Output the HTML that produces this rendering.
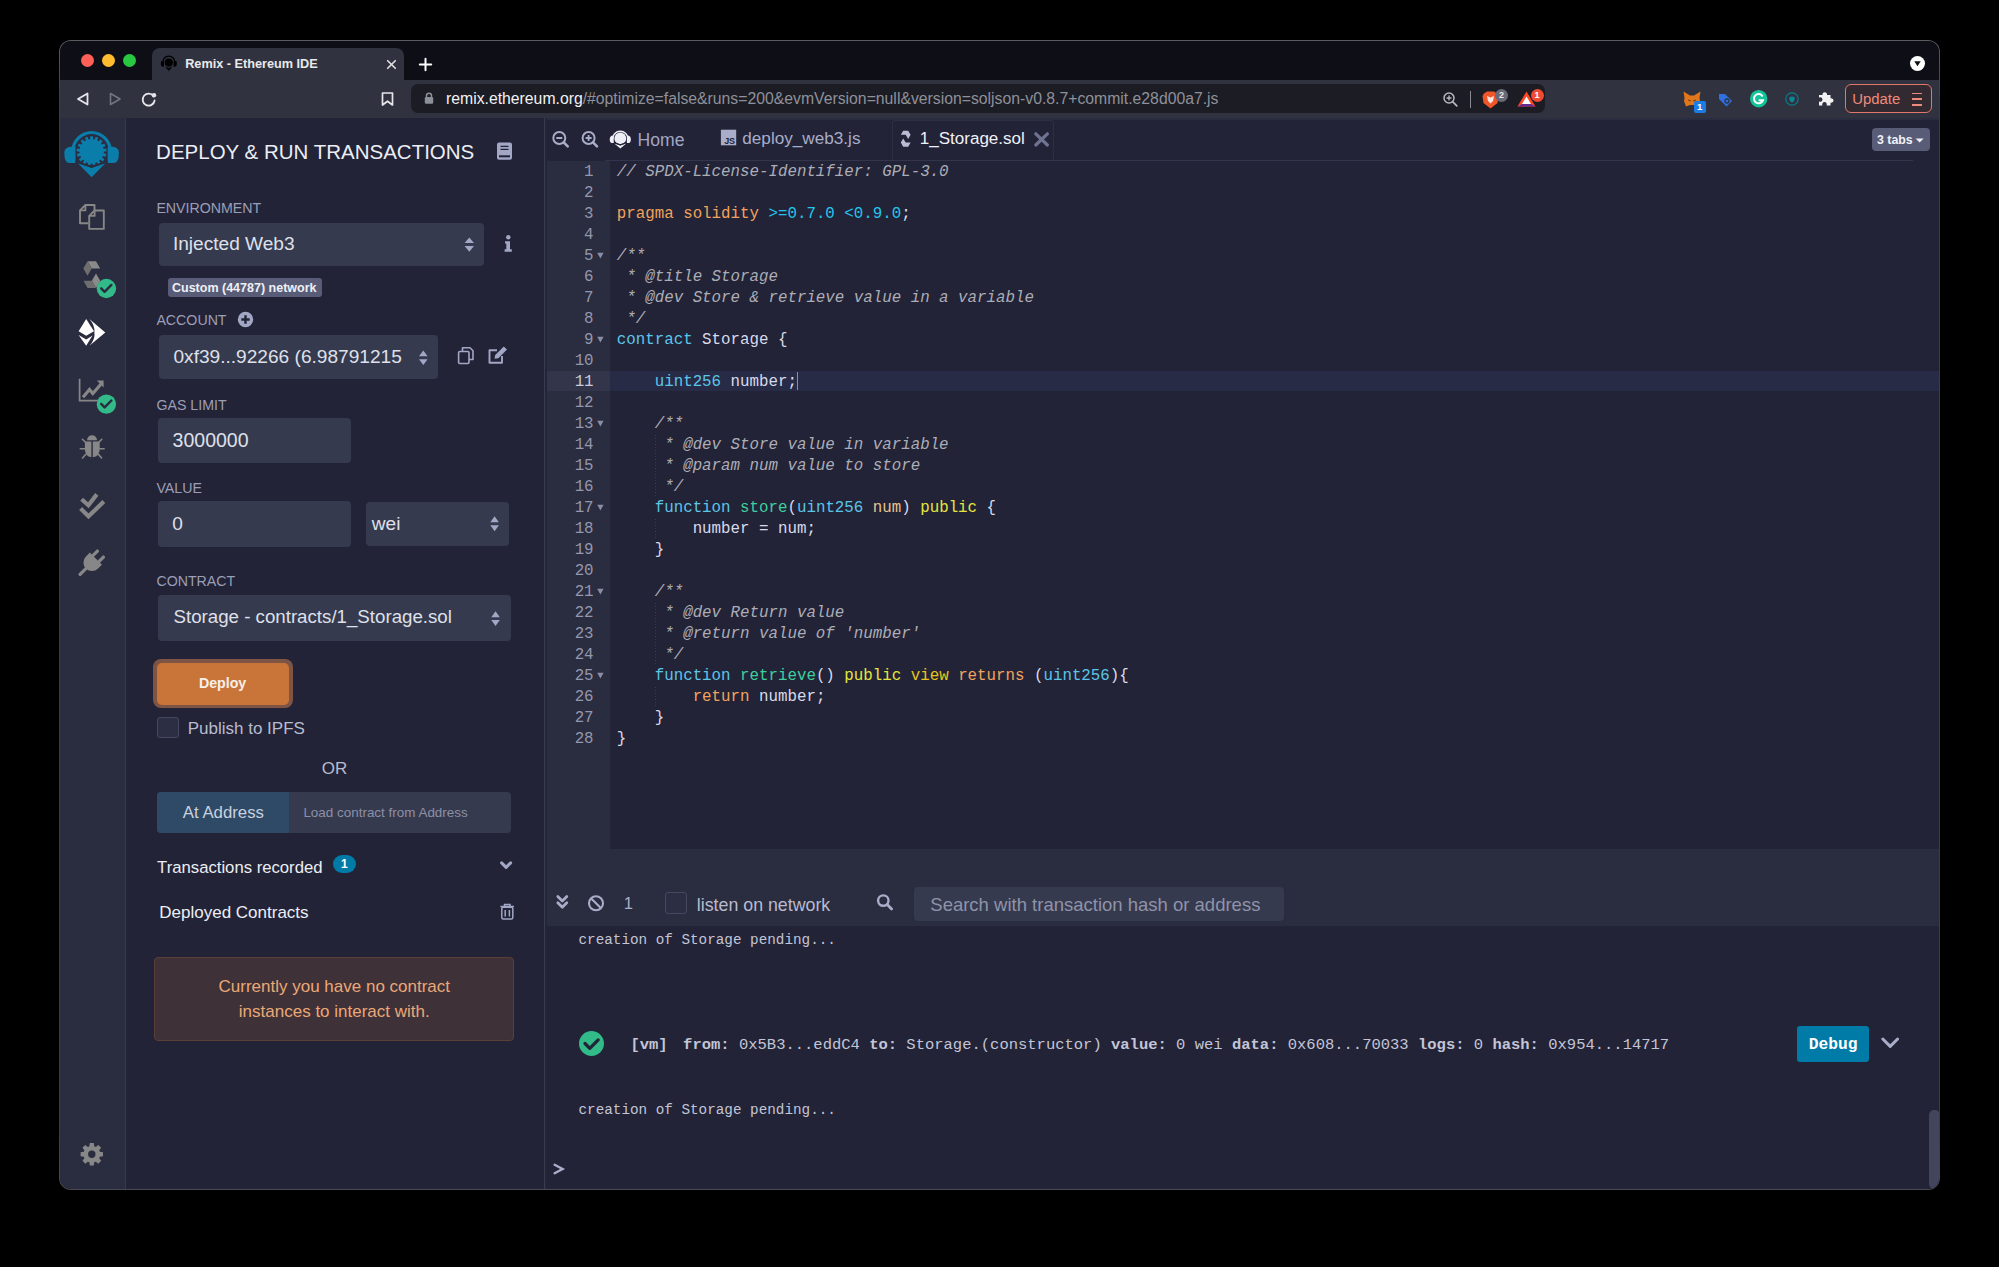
<!DOCTYPE html><html><head><meta charset="utf-8"><title>Remix - Ethereum IDE</title>
<style>html,body{margin:0;padding:0;background:#000;width:1999px;height:1267px;overflow:hidden;position:relative;font-family:"Liberation Sans", sans-serif}
div,svg{box-sizing:border-box}</style></head><body>
<div style="position:absolute;left:59px;top:40px;width:1881px;height:1150px;border-radius:12px;background:linear-gradient(#5c5d63,#3c3d43 60px,#3c3d43 1090px,#4a4b52)"></div>
<div style="position:absolute;left:60px;top:41px;width:1879px;height:1148px;border-radius:11px;overflow:hidden;background:#222336">
<div style="position:absolute;left:-60px;top:-41px;width:1999px;height:1267px">
<div style="position:absolute;left:59px;top:40px;width:1881px;height:40px;background:#0d0e16"></div>
<div style="position:absolute;left:59px;top:80px;width:1881px;height:38px;background:#30333f"></div>
<div style="position:absolute;left:152px;top:48px;width:252px;height:33px;background:#30333f;border-radius:8px 8px 0 0"></div>
<div style="position:absolute;left:80.5px;top:54px;width:13px;height:13px;border-radius:50%;background:#fe5f57"></div>
<div style="position:absolute;left:101.5px;top:54px;width:13px;height:13px;border-radius:50%;background:#febc2e"></div>
<div style="position:absolute;left:122.5px;top:54px;width:13px;height:13px;border-radius:50%;background:#28c840"></div>
<svg style="position:absolute;left:0;top:0" width="1999" height="1267" viewBox="0 0 1999 1267"><g fill="#000"><circle cx="168.8" cy="62.6" r="4.1"/><path d="M161 61.2 H164 V66.8 H162.6 Q160.8 66.6 160.8 64 Q160.8 61.6 161 61.2z M176.6 61.2 H173.6 V66.8 H175 Q176.8 66.6 176.8 64 Q176.8 61.6 176.6 61.2z"/><path d="M165 66.6 L168.8 67.9 L172.6 66.6 L168.8 70.9z"/></g><path d="M162.9 62 A5.9 5.9 0 0 1 174.7 62" fill="none" stroke="#000" stroke-width="1.3"/></svg>
<div style="position:absolute;left:185.20px;top:57.55px;font-family:'Liberation Sans', sans-serif;font-size:12.7px;line-height:12.7px;font-weight:600;color:#e9e9ec;white-space:pre;">Remix - Ethereum IDE</div>
<svg style="position:absolute;left:387px;top:59.5px;overflow:visible;" width="9" height="9" viewBox="0 0 9 9"><path d="M0.7 0.7 L8.3 8.3 M8.3 0.7 L0.7 8.3" stroke="#e0e0e4" stroke-width="1.6" stroke-linecap="round"/></svg>
<svg style="position:absolute;left:418.5px;top:57.8px;overflow:visible;" width="13" height="13" viewBox="0 0 13 13"><path d="M6.5 0.8 V12.2 M0.8 6.5 H12.2" stroke="#fff" stroke-width="2" stroke-linecap="round"/></svg>
<svg style="position:absolute;left:1909.5px;top:56.4px;overflow:visible;" width="15" height="15" viewBox="0 0 15 15"><circle cx="7.5" cy="7.5" r="7.5" fill="#fff"/><path d="M4.3 5.3 L10.7 5.3 L7.5 10.2z" fill="#0d0e16"/></svg>
<svg style="position:absolute;left:76px;top:92px;overflow:visible;" width="13" height="14" viewBox="0 0 13 14"><path d="M11.5 1.5 L11.5 12.5 L2 7z" fill="none" stroke="#e6e6ea" stroke-width="1.8" stroke-linejoin="round"/></svg>
<svg style="position:absolute;left:109px;top:92px;overflow:visible;" width="13" height="14" viewBox="0 0 13 14"><path d="M1.5 1.5 L1.5 12.5 L11 7z" fill="none" stroke="#72747e" stroke-width="1.6" stroke-linejoin="round"/></svg>
<svg style="position:absolute;left:141px;top:92px;overflow:visible;" width="16" height="15" viewBox="0 0 16 15"><path d="M12.6 4.2 A6 6 0 1 0 13.6 8.5" fill="none" stroke="#e6e6ea" stroke-width="1.8" stroke-linecap="round"/><circle cx="13" cy="3.3" r="2.2" fill="#e6e6ea"/></svg>
<svg style="position:absolute;left:381px;top:92px;overflow:visible;" width="13" height="14" viewBox="0 0 13 14"><path d="M1.5 1 H11.5 V13 L6.5 9.2 L1.5 13z" fill="none" stroke="#e6e6ea" stroke-width="1.7" stroke-linejoin="round"/></svg>
<div style="position:absolute;left:411px;top:84px;width:1134px;height:29px;background:#1b1c24;border-radius:7px"></div>
<svg style="position:absolute;left:424px;top:92px;overflow:visible;" width="10" height="12" viewBox="0 0 10 12"><path d="M2.5 5 V3.8 A2.5 2.5 0 0 1 7.5 3.8 V5" fill="none" stroke="#8e9099" stroke-width="1.5"/><rect x="0.8" y="5" width="8.4" height="6.8" rx="1.2" fill="#8e9099"/></svg>
<div style="position:absolute;left:446.00px;top:90.85px;font-family:'Liberation Sans', sans-serif;font-size:15.77px;line-height:15.77px;font-weight:400;color:#fff;white-space:pre;"><span style="color:#f2f2f4">remix.ethereum.org</span><span style="color:#8f9099">/#optimize=false&amp;runs=200&amp;evmVersion=null&amp;version=soljson-v0.8.7+commit.e28d00a7.js</span></div>
<svg style="position:absolute;left:1443px;top:92px;overflow:visible;" width="15" height="15" viewBox="0 0 15 15"><circle cx="6" cy="6" r="5" fill="none" stroke="#b6b7bf" stroke-width="1.5"/><path d="M9.6 9.6 L13.8 13.8" stroke="#b6b7bf" stroke-width="1.7" stroke-linecap="round"/><path d="M6 3.5 V8.5 M3.5 6 H8.5" stroke="#b6b7bf" stroke-width="1.4"/></svg>
<div style="position:absolute;left:1469.5px;top:90.5px;width:1.5px;height:17.0px;background:#8a8b94"></div>
<svg style="position:absolute;left:1482px;top:90.5px;overflow:visible;" width="17" height="18" viewBox="0 0 17 18"><path d="M2 2.5 L5 0.5 H12 L15 2.5 L16.5 5 L15.5 12 L8.5 17.5 L1.5 12 L0.5 5z" fill="#f1562b"/><path d="M5 5 L8.5 6.5 L12 5 L11 10 L8.5 12.5 L6 10z" fill="#fff" opacity="0.85"/></svg>
<div style="position:absolute;left:1495px;top:88.5px;width:13px;height:13px;border-radius:50%;background:#686a78;color:#e8e8ec;font:700 9px/13px 'Liberation Sans',sans-serif;text-align:center">2</div>
<svg style="position:absolute;left:1517px;top:91px;overflow:visible;" width="19" height="16" viewBox="0 0 19 16"><path d="M9.5 0.5 L18.5 15.5 H0.5z" fill="#ff4724"/><path d="M9.5 5.5 L14 13 H5z" fill="#fff"/><path d="M0.5 15.5 L5 13 H14 L18.5 15.5z" fill="#662d91"/></svg>
<div style="position:absolute;left:1530.5px;top:88.5px;width:13px;height:13px;border-radius:50%;background:#f04a33;color:#fff;font:700 9px/13px 'Liberation Sans',sans-serif;text-align:center">1</div>
<svg style="position:absolute;left:1682.5px;top:90.5px;overflow:visible;" width="18" height="16" viewBox="0 0 18 16"><path d="M0.5 0.5 L7 4.5 H11 L17.5 0.5 L16.5 7 L17 10 L15 15.5 L11 14 H7 L3 15.5 L1 10 L1.5 7z" fill="#e2761b"/><path d="M5 9 L8 10 M13 9 L10 10" stroke="#763d16" stroke-width="1"/></svg>
<div style="position:absolute;left:1693.5px;top:100.5px;width:12.5px;height:12.5px;border-radius:2px;background:#1c7ce6;color:#fff;font:700 9.5px/12.5px 'Liberation Sans',sans-serif;text-align:center">1</div>
<svg style="position:absolute;left:1717.5px;top:92.5px;overflow:visible;" width="15" height="14" viewBox="0 0 15 14"><path d="M1 1 H7 L14 8 L8.5 13.5 L1 6z" fill="#2f6fe0"/><circle cx="9" cy="8" r="2" fill="none" stroke="#30333f" stroke-width="1.3"/></svg>
<svg style="position:absolute;left:1749.7px;top:89.9px;overflow:visible;" width="17.4" height="17.4" viewBox="0 0 17.4 17.4"><circle cx="8.7" cy="8.7" r="8.7" fill="#15c39a"/><path d="M12.2 5.8 A4.6 4.6 0 1 0 12.9 10.3 H9.5" fill="none" stroke="#fff" stroke-width="2" stroke-linecap="round"/></svg>
<svg style="position:absolute;left:1784.9px;top:91.5px;overflow:visible;" width="14" height="14" viewBox="0 0 14 14"><circle cx="7" cy="7" r="6.2" fill="none" stroke="#0c7b8a" stroke-width="1.2"/><path d="M4.2 5.6 Q7 3.2 9.8 5.6 Q10 9.6 7 10.4 Q4 9.6 4.2 5.6z" fill="#0d8596"/></svg>
<svg style="position:absolute;left:1818px;top:90px;overflow:visible;" width="16" height="16" viewBox="0 0 16 16"><path d="M1 5 H4.5 A2.3 2.3 0 1 1 9 5 H12.5 V8.3 A2.3 2.3 0 1 1 12.5 12.7 V15.5 H8.5 A2.3 2.3 0 1 0 4.5 15.5 H1 V11.5 A2.3 2.3 0 1 0 1 7.5z" fill="#f2f2f2"/></svg>
<div style="position:absolute;left:1845px;top:84.2px;width:86.6px;height:28.8px;border:1.5px solid #e0776a;border-radius:6px;background:#332a31"></div>
<div style="position:absolute;left:1852.20px;top:91.59px;font-family:'Liberation Sans', sans-serif;font-size:14.9px;line-height:14.9px;font-weight:400;color:#ee8a7c;white-space:pre;">Update</div>
<div style="position:absolute;left:1912px;top:92.5px;width:10px;height:1.5999999999999943px;background:#ee8a7c"></div>
<div style="position:absolute;left:1912px;top:98.3px;width:10px;height:1.5999999999999943px;background:#ee8a7c"></div>
<div style="position:absolute;left:1912px;top:104.1px;width:10px;height:1.5999999999999943px;background:#ee8a7c"></div>
<div style="position:absolute;left:59px;top:118px;width:66px;height:1071px;background:#2a2c3f"></div>
<div style="position:absolute;left:125px;top:118px;width:1px;height:1071px;background:#36384c"></div>
<div style="position:absolute;left:126px;top:118px;width:418px;height:1071px;background:#222336"></div>
<div style="position:absolute;left:544px;top:118px;width:1px;height:1071px;background:#393b4f"></div>
<div style="position:absolute;left:545px;top:118px;width:2px;height:1071px;background:#242538"></div>
<svg style="position:absolute;left:0;top:0" width="1999" height="1267" viewBox="0 0 1999 1267"><g fill="#0a7dab"><path d="M71.2 151.3 A20.4 20.4 0 0 1 112 151.3 L112 157 L108.8 157 L108.8 151.3 A17.2 17.2 0 0 0 74.4 151.3 L74.4 157 L71.2 157z"/><path d="M75.5 146.8 L70 146.8 Q64.3 147.5 64.3 153 Q64.3 162.9 69 162.9 L75.6 162.9z"/><path d="M107.7 146.8 L113.2 146.8 Q118.9 147.5 118.9 153 Q118.9 162.9 114.2 162.9 L107.6 162.9z"/><path d="M77.6 163 L91.6 168 L105.6 163 L91.6 177.3z"/></g><clipPath id="sunclip"><path d="M60 120 H124 V160.6 L91.6 165.4 L60 160.6z"/></clipPath><circle cx="91.6" cy="151.3" r="12.1" fill="#0a7dab" clip-path="url(#sunclip)"/><path d="M90.22 136.36 L92.98 136.36 L93.09 139.49 L94.47 139.75 L95.70 136.87 L98.29 137.87 L97.26 140.83 L98.45 141.57 L100.64 139.33 L102.69 141.19 L100.66 143.58 L101.50 144.70 L104.35 143.40 L105.59 145.88 L102.83 147.37 L103.22 148.73 L106.34 148.54 L106.60 151.30 L103.49 151.70 L103.36 153.10 L106.34 154.06 L105.59 156.72 L102.55 155.97 L101.92 157.22 L104.35 159.20 L102.69 161.41 L100.12 159.61 L99.08 160.55 L100.64 163.27 L98.29 164.73 L96.55 162.12 L95.24 162.63 L95.70 165.73 L92.98 166.24 L92.30 163.18 L90.90 163.18 L90.22 166.24 L87.50 165.73 L87.96 162.63 L86.65 162.12 L84.91 164.73 L82.56 163.27 L84.12 160.55 L83.08 159.61 L80.51 161.41 L78.85 159.20 L81.28 157.22 L80.65 155.97 L77.61 156.72 L76.86 154.06 L79.84 153.10 L79.71 151.70 L76.60 151.30 L76.86 148.54 L79.98 148.73 L80.37 147.37 L77.61 145.88 L78.85 143.40 L81.70 144.70 L82.54 143.58 L80.51 141.19 L82.56 139.33 L84.75 141.57 L85.94 140.83 L84.91 137.87 L87.50 136.87 L88.73 139.75 L90.11 139.49z" fill="#0a7dab" clip-path="url(#sunclip)"/><path d="M75.5 161.6 L91.6 166.6 L107.7 161.6" fill="none" stroke="#2a2c3f" stroke-width="1.9"/><g fill="none" stroke="#878787" stroke-width="1.9" stroke-linejoin="round"><path d="M88.4 223.2 H80 V210.4 L85.4 205 H94.5 V210.2"/><path d="M80 210.4 H85.4 V205"/><path d="M89.2 215.9 L94.6 210.5 H103.8 V228.9 H89.2z"/><path d="M89.2 215.9 H94.6 V210.5"/></g><g><path d="M87.5 261.3 L96 261.3 L100.2 268.6 L91.7 268.6z" fill="#8a8a8a"/><path d="M87.5 261.3 L91.7 268.6 L87.5 275.8 L83.3 268.6z" fill="#6e6e6e"/><path d="M91.7 268.6 L100.2 268.6 L96 275.8 L87.5 275.8z" fill="#5a5a5a" opacity="0.0"/><path d="M96 273.4 L100.2 280.7 L96 287.9 L91.8 280.7z" fill="#8a8a8a"/><path d="M83.5 280.7 L92 280.7 L96 287.9 L87.6 287.9z" fill="#6e6e6e"/></g><circle cx="106.4" cy="288.5" r="9.7" fill="#32ba89"/><path d="M101.2 288.3 L104.60000000000001 291.8 L111.4 284.9" fill="none" stroke="#2a2c3f" stroke-width="2.4" stroke-linecap="round" stroke-linejoin="round"/><g fill="#fff"><path d="M86.2 319 L94 331.3 L86.2 335.8 L78.6 331.3z"/><path d="M78.6 335 L86.2 339.5 L92.5 335.6 L86.2 345.8z"/><path d="M89.4 319 L105.3 332.4 L89.4 345.8 Q95.5 339 94.4 332.4 Q95 325 89.4 319z"/></g><g fill="none" stroke="#878787"><path d="M79.6 378.8 V400.6 H98" stroke-width="1.7"/><path d="M83 397.2 L89.5 389.5 L92.8 393.5 L101.5 383.5" stroke-width="3.2" stroke-linejoin="miter"/></g><path d="M96.8 380.6 L103.6 380.6 L103.6 387.6z" fill="#878787"/><circle cx="106.4" cy="404.1" r="9.7" fill="#32ba89"/><path d="M101.2 403.90000000000003 L104.60000000000001 407.40000000000003 L111.4 400.5" fill="none" stroke="#2a2c3f" stroke-width="2.4" stroke-linecap="round" stroke-linejoin="round"/><g fill="#878787"><path d="M87 440.2 A5 5 0 0 1 97.1 440.2z"/><path d="M84.9 441.4 H91.4 V457.2 Q84.9 456.5 84.9 449z"/><path d="M92.8 441.4 H99.7 V449 Q99.7 456.5 92.8 457.2z"/></g><g stroke="#878787" stroke-width="1.6" stroke-linecap="round"><path d="M82.4 439.3 L86 442.8 M101.8 439.3 L98.3 442.8 M80.3 448.7 H84.9 M99.7 448.7 H104.1 M82.5 458 L85.6 454.4 M101.6 458 L98.6 454.4"/></g><g fill="none" stroke="#878787" stroke-width="4.2" stroke-linecap="butt" stroke-linejoin="miter"><path d="M81.6 499.2 L88.4 505.2 L96.8 494.4"/><path d="M80.6 508.6 L88.5 516.3 L103.8 501.6"/></g><g transform="translate(91.3 563.2) rotate(45)" fill="#878787"><rect x="-5.9" y="-14.5" width="3.3" height="9" rx="1.6"/><rect x="2.6" y="-14.5" width="3.3" height="9" rx="1.6"/><path d="M-8.6 -6.5 H8.6 V-1 A8.6 8.6 0 0 1 -8.6 -1z"/><rect x="-1.65" y="5" width="3.3" height="12.5" rx="1.6"/></g><path d="M103.02 1152.30 L103.02 1156.30 L99.84 1156.74 L99.21 1158.26 L101.15 1160.82 L98.32 1163.65 L95.76 1161.71 L94.24 1162.34 L93.80 1165.52 L89.80 1165.52 L89.36 1162.34 L87.84 1161.71 L85.28 1163.65 L82.45 1160.82 L84.39 1158.26 L83.76 1156.74 L80.58 1156.30 L80.58 1152.30 L83.76 1151.86 L84.39 1150.34 L82.45 1147.78 L85.28 1144.95 L87.84 1146.89 L89.36 1146.26 L89.80 1143.08 L93.80 1143.08 L94.24 1146.26 L95.76 1146.89 L98.32 1144.95 L101.15 1147.78 L99.21 1150.34 L99.84 1151.86z M95.5 1154.3 A3.7 3.7 0 1 0 88.1 1154.3 A3.7 3.7 0 1 0 95.5 1154.3z" fill="#878787" fill-rule="evenodd"/></svg>
<div style="position:absolute;left:156.10px;top:141.55px;font-family:'Liberation Sans', sans-serif;font-size:20.5px;line-height:20.5px;font-weight:400;color:#eceef5;white-space:pre;">DEPLOY &amp; RUN TRANSACTIONS</div>
<div style="position:absolute;left:156.40px;top:200.98px;font-family:'Liberation Sans', sans-serif;font-size:14.2px;line-height:14.2px;font-weight:400;color:#9c9eb7;white-space:pre;">ENVIRONMENT</div>
<div style="position:absolute;left:158.5px;top:222.6px;width:325.5px;height:43.7px;background:#363a4e;border-radius:4px;"></div>
<div style="position:absolute;left:172.90px;top:233.93px;font-family:'Liberation Sans', sans-serif;font-size:19.1px;line-height:19.1px;font-weight:400;color:#dfe0ea;white-space:pre;">Injected Web3</div>
<div style="position:absolute;left:168px;top:278.3px;width:154.0px;height:18.4px;background:#595c76;border-radius:3px;"></div>
<div style="position:absolute;left:172.00px;top:281.62px;font-family:'Liberation Sans', sans-serif;font-size:12.5px;line-height:12.5px;font-weight:700;color:#eef0f6;white-space:pre;">Custom (44787) network</div>
<div style="position:absolute;left:156.40px;top:313.28px;font-family:'Liberation Sans', sans-serif;font-size:14.2px;line-height:14.2px;font-weight:400;color:#9c9eb7;white-space:pre;">ACCOUNT</div>
<div style="position:absolute;left:158.5px;top:335.2px;width:279.1px;height:44.3px;background:#363a4e;border-radius:4px;"></div>
<div style="position:absolute;left:173.50px;top:346.53px;font-family:'Liberation Sans', sans-serif;font-size:19.1px;line-height:19.1px;font-weight:400;color:#dfe0ea;white-space:pre;">0xf39...92266 (6.98791215</div>
<div style="position:absolute;left:156.40px;top:397.68px;font-family:'Liberation Sans', sans-serif;font-size:14.2px;line-height:14.2px;font-weight:400;color:#9c9eb7;white-space:pre;">GAS LIMIT</div>
<div style="position:absolute;left:157.6px;top:417.9px;width:193.5px;height:45.6px;background:#363a4e;border-radius:4px;"></div>
<div style="position:absolute;left:172.60px;top:430.79px;font-family:'Liberation Sans', sans-serif;font-size:19.5px;line-height:19.5px;font-weight:400;color:#dfe0ea;white-space:pre;">3000000</div>
<div style="position:absolute;left:156.40px;top:480.78px;font-family:'Liberation Sans', sans-serif;font-size:14.2px;line-height:14.2px;font-weight:400;color:#9c9eb7;white-space:pre;">VALUE</div>
<div style="position:absolute;left:157.6px;top:500.8px;width:193.4px;height:45.8px;background:#363a4e;border-radius:4px;"></div>
<div style="position:absolute;left:172.20px;top:514.33px;font-family:'Liberation Sans', sans-serif;font-size:19.1px;line-height:19.1px;font-weight:400;color:#dfe0ea;white-space:pre;">0</div>
<div style="position:absolute;left:366.2px;top:502px;width:143.1px;height:43.7px;background:#363a4e;border-radius:4px;"></div>
<div style="position:absolute;left:371.80px;top:514.33px;font-family:'Liberation Sans', sans-serif;font-size:19.1px;line-height:19.1px;font-weight:400;color:#dfe0ea;white-space:pre;">wei</div>
<div style="position:absolute;left:156.40px;top:573.98px;font-family:'Liberation Sans', sans-serif;font-size:14.2px;line-height:14.2px;font-weight:400;color:#9c9eb7;white-space:pre;">CONTRACT</div>
<div style="position:absolute;left:157.6px;top:594.5px;width:353.6px;height:46.2px;background:#363a4e;border-radius:4px;"></div>
<div style="position:absolute;left:173.50px;top:608.17px;font-family:'Liberation Sans', sans-serif;font-size:18.7px;line-height:18.7px;font-weight:400;color:#dfe0ea;white-space:pre;">Storage - contracts/1_Storage.sol</div>
<div style="position:absolute;left:153.4px;top:658.6px;width:139.2px;height:49.8px;border-radius:8px;background:#7e5545"></div>
<div style="position:absolute;left:157.2px;top:663px;width:132.0px;height:42.1px;background:#c97539;border-radius:5px;"></div>
<div style="position:absolute;left:198.90px;top:675.98px;font-family:'Liberation Sans', sans-serif;font-size:14.2px;line-height:14.2px;font-weight:700;color:#f7efe9;white-space:pre;">Deploy</div>
<div style="position:absolute;left:157.2px;top:717px;width:21.7px;height:20.8px;border-radius:3px;background:#2c2f43;border:1px solid #45485e"></div>
<div style="position:absolute;left:187.70px;top:719.91px;font-family:'Liberation Sans', sans-serif;font-size:17px;line-height:17px;font-weight:400;color:#b9bbcf;white-space:pre;">Publish to IPFS</div>
<div style="position:absolute;left:321.70px;top:759.61px;font-family:'Liberation Sans', sans-serif;font-size:17px;line-height:17px;font-weight:400;color:#b9bbcf;white-space:pre;">OR</div>
<div style="position:absolute;left:157.2px;top:791.6px;width:354.0px;height:41.9px;background:#363a4e;border-radius:4px;"></div>
<div style="position:absolute;left:157.2px;top:791.6px;width:131.6px;height:41.9px;background:#2e4a67;border-radius:4px 0 0 4px"></div>
<div style="position:absolute;left:182.80px;top:805.18px;font-family:'Liberation Sans', sans-serif;font-size:16.8px;line-height:16.8px;font-weight:400;color:#c9d1de;white-space:pre;">At Address</div>
<div style="position:absolute;left:303.40px;top:805.91px;font-family:'Liberation Sans', sans-serif;font-size:13.45px;line-height:13.45px;font-weight:400;color:#8c90a8;white-space:pre;">Load contract from Address</div>
<div style="position:absolute;left:157.10px;top:859.76px;font-family:'Liberation Sans', sans-serif;font-size:16.7px;line-height:16.7px;font-weight:400;color:#eceef5;white-space:pre;">Transactions recorded</div>
<div style="position:absolute;left:332.9px;top:854.9px;width:22.8px;height:18.6px;border-radius:9.3px;background:#007aa6;color:#fff;font:700 12px/18.6px 'Liberation Sans',sans-serif;text-align:center">1</div>
<div style="position:absolute;left:159.30px;top:904.41px;font-family:'Liberation Sans', sans-serif;font-size:17px;line-height:17px;font-weight:400;color:#eceef5;white-space:pre;">Deployed Contracts</div>
<div style="position:absolute;left:154.2px;top:957.2px;width:360.2px;height:84px;border-radius:4px;background:#3e3137;border:1px solid #5a3f36"></div>
<div style="position:absolute;left:154.2px;top:975.2px;width:360.2px;font-family:'Liberation Sans',sans-serif;font-size:17px;line-height:24.7px;color:#eba877;text-align:center">Currently you have no contract<br>instances to interact with.</div>
<svg style="position:absolute;left:0;top:0" width="1999" height="1267" viewBox="0 0 1999 1267"><rect x="497" y="142.4" width="15" height="17.4" rx="2" fill="#a3a7c6"/><rect x="499" y="155.3" width="11" height="2" fill="#222336"/><path d="M500.5 146.3 H508.5 M500.5 149.3 H508.5" stroke="#222336" stroke-width="1.2"/><path d="M464.6 243.12 L469.3 237.4 L474 243.12z M464.6 245.98 L469.3 251.7 L474 245.98z" fill="#a3a7c6"/><circle cx="508.3" cy="237.2" r="2.2" fill="#a3a7c6"/><path d="M505 241.3 H510 V249.3 H511.8 V251.7 H504.6 V249.3 H506.3 V243.6 H505z" fill="#a3a7c6"/><circle cx="245.5" cy="319.5" r="7.7" fill="#a3a7c6"/><path d="M245.5 315.3 V323.7 M241.3 319.5 H249.7" stroke="#222336" stroke-width="2.4"/><path d="M419 356.24 L423.3 350.4 L427.6 356.24z M419 359.15999999999997 L423.3 365 L427.6 359.15999999999997z" fill="#a3a7c6"/><g fill="none" stroke="#a3a7c6" stroke-width="1.6" stroke-linejoin="round"><path d="M462.5 351.5 V347.8 H470 L473 350.8 V359.5 H469"/><rect x="458.6" y="351.5" width="10.4" height="12" rx="1.2"/></g><g fill="none" stroke="#a3a7c6" stroke-width="1.9" stroke-linejoin="round"><path d="M497 350.3 H489.5 V362.8 H502 V356"/></g><path d="M494.5 358.7 L495.2 355 L503.8 346.4 L507 349.6 L498.4 358.2z" fill="#a3a7c6"/><path d="M490.3 522.2 L494.6 516.2 L498.9 522.2z M490.3 525.2 L494.6 531.2 L498.9 525.2z" fill="#a3a7c6"/><path d="M491.3 617.18 L495.55 611.3 L499.8 617.18z M491.3 620.12 L495.55 626 L499.8 620.12z" fill="#a3a7c6"/><path d="M501.6 862.9 L506.1 867.4 L510.6 862.9" fill="none" stroke="#a3a7c6" stroke-width="3" stroke-linecap="round" stroke-linejoin="round"/><g fill="none" stroke="#a3a7c6" stroke-width="1.5"><rect x="501.8" y="907.3" width="11" height="11.8" rx="1.5"/><path d="M500.4 906.6 H514 M504.5 906.2 V904.6 H510 V906.2 M505.2 910 V916.5 M509.4 910 V916.5"/></g></svg>
<div style="position:absolute;left:547px;top:118px;width:1393px;height:1071px;background:#222336"></div>
<div style="position:absolute;left:547px;top:118px;width:1393px;height:1.5px;background:#2a2c3f"></div>
<div style="position:absolute;left:637.60px;top:131.50px;font-family:'Liberation Sans', sans-serif;font-size:17.6px;line-height:17.6px;font-weight:400;color:#a3a6c4;white-space:pre;">Home</div>
<div style="position:absolute;left:742.30px;top:129.88px;font-family:'Liberation Sans', sans-serif;font-size:17.15px;line-height:17.15px;font-weight:400;color:#a9adc9;white-space:pre;">deploy_web3.js</div>
<div style="position:absolute;left:892.3px;top:119.5px;width:162px;height:41px;border:1px solid #2c2e42;border-bottom:none;border-radius:3px 3px 0 0;background:#222336"></div>
<div style="position:absolute;left:919.70px;top:129.66px;font-family:'Liberation Sans', sans-serif;font-size:17.06px;line-height:17.06px;font-weight:400;color:#f0f1f6;white-space:pre;">1_Storage.sol</div>
<div style="position:absolute;left:1872px;top:128px;width:57.6px;height:23px;border-radius:4px;background:#595c76"></div>
<div style="position:absolute;left:1877.10px;top:133.59px;font-family:'Liberation Sans', sans-serif;font-size:12.3px;line-height:12.3px;font-weight:700;color:#f0f1f6;white-space:pre;">3 tabs</div>
<div style="position:absolute;left:605px;top:159.8px;width:1308px;height:1.1999999999999886px;background:#33364b"></div>
<div style="position:absolute;left:547px;top:161px;width:63px;height:688px;background:#2a2c3f"></div>
<div style="position:absolute;left:610px;top:370.7px;width:1330px;height:19.900000000000034px;background:#272b46"></div>
<div style="position:absolute;left:547px;top:370.7px;width:63px;height:19.900000000000034px;background:#33364b"></div>
<div style="position:absolute;left:540px;width:53.6px;text-align:right;top:164.89px;font-family:'Liberation Mono',monospace;font-size:15.8px;line-height:15.8px;color:#9497ad">1</div>
<div style="position:absolute;left:616.8px;top:164.89px;font-family:'Liberation Mono',monospace;font-size:15.8px;line-height:15.8px;color:#d9daeb;white-space:pre"><span style="color:#acadb6;font-style:italic;">// SPDX-License-Identifier: GPL-3.0</span></div>
<div style="position:absolute;left:540px;width:53.6px;text-align:right;top:185.89px;font-family:'Liberation Mono',monospace;font-size:15.8px;line-height:15.8px;color:#9497ad">2</div>
<div style="position:absolute;left:540px;width:53.6px;text-align:right;top:206.89px;font-family:'Liberation Mono',monospace;font-size:15.8px;line-height:15.8px;color:#9497ad">3</div>
<div style="position:absolute;left:616.8px;top:206.89px;font-family:'Liberation Mono',monospace;font-size:15.8px;line-height:15.8px;color:#d9daeb;white-space:pre"><span style="color:#f2a25e;">pragma solidity</span> <span style="color:#24c5ee;">&gt;=0.7.0 &lt;0.9.0</span><span style="color:#d9daeb;">;</span></div>
<div style="position:absolute;left:540px;width:53.6px;text-align:right;top:227.89px;font-family:'Liberation Mono',monospace;font-size:15.8px;line-height:15.8px;color:#9497ad">4</div>
<div style="position:absolute;left:540px;width:53.6px;text-align:right;top:248.89px;font-family:'Liberation Mono',monospace;font-size:15.8px;line-height:15.8px;color:#9497ad">5</div>
<div style="position:absolute;left:616.8px;top:248.89px;font-family:'Liberation Mono',monospace;font-size:15.8px;line-height:15.8px;color:#d9daeb;white-space:pre"><span style="color:#acadb6;font-style:italic;">/**</span></div>
<div style="position:absolute;left:540px;width:53.6px;text-align:right;top:269.89px;font-family:'Liberation Mono',monospace;font-size:15.8px;line-height:15.8px;color:#9497ad">6</div>
<div style="position:absolute;left:616.8px;top:269.89px;font-family:'Liberation Mono',monospace;font-size:15.8px;line-height:15.8px;color:#d9daeb;white-space:pre"><span style="color:#acadb6;font-style:italic;"> * @title Storage</span></div>
<div style="position:absolute;left:540px;width:53.6px;text-align:right;top:290.89px;font-family:'Liberation Mono',monospace;font-size:15.8px;line-height:15.8px;color:#9497ad">7</div>
<div style="position:absolute;left:616.8px;top:290.89px;font-family:'Liberation Mono',monospace;font-size:15.8px;line-height:15.8px;color:#d9daeb;white-space:pre"><span style="color:#acadb6;font-style:italic;"> * @dev Store &amp; retrieve value in a variable</span></div>
<div style="position:absolute;left:540px;width:53.6px;text-align:right;top:311.89px;font-family:'Liberation Mono',monospace;font-size:15.8px;line-height:15.8px;color:#9497ad">8</div>
<div style="position:absolute;left:616.8px;top:311.89px;font-family:'Liberation Mono',monospace;font-size:15.8px;line-height:15.8px;color:#d9daeb;white-space:pre"><span style="color:#acadb6;font-style:italic;"> */</span></div>
<div style="position:absolute;left:540px;width:53.6px;text-align:right;top:332.89px;font-family:'Liberation Mono',monospace;font-size:15.8px;line-height:15.8px;color:#9497ad">9</div>
<div style="position:absolute;left:616.8px;top:332.89px;font-family:'Liberation Mono',monospace;font-size:15.8px;line-height:15.8px;color:#d9daeb;white-space:pre"><span style="color:#5cc5e8;">contract</span><span style="color:#d9daeb;"> Storage {</span></div>
<div style="position:absolute;left:540px;width:53.6px;text-align:right;top:353.89px;font-family:'Liberation Mono',monospace;font-size:15.8px;line-height:15.8px;color:#9497ad">10</div>
<div style="position:absolute;left:540px;width:53.6px;text-align:right;top:374.89px;font-family:'Liberation Mono',monospace;font-size:15.8px;line-height:15.8px;color:#c9cbd9">11</div>
<div style="position:absolute;left:616.8px;top:374.89px;font-family:'Liberation Mono',monospace;font-size:15.8px;line-height:15.8px;color:#d9daeb;white-space:pre">    <span style="color:#5cc5e8;">uint256</span><span style="color:#d9daeb;"> number;</span></div>
<div style="position:absolute;left:540px;width:53.6px;text-align:right;top:395.89px;font-family:'Liberation Mono',monospace;font-size:15.8px;line-height:15.8px;color:#9497ad">12</div>
<div style="position:absolute;left:540px;width:53.6px;text-align:right;top:416.89px;font-family:'Liberation Mono',monospace;font-size:15.8px;line-height:15.8px;color:#9497ad">13</div>
<div style="position:absolute;left:616.8px;top:416.89px;font-family:'Liberation Mono',monospace;font-size:15.8px;line-height:15.8px;color:#d9daeb;white-space:pre">    <span style="color:#acadb6;font-style:italic;">/**</span></div>
<div style="position:absolute;left:540px;width:53.6px;text-align:right;top:437.89px;font-family:'Liberation Mono',monospace;font-size:15.8px;line-height:15.8px;color:#9497ad">14</div>
<div style="position:absolute;left:616.8px;top:437.89px;font-family:'Liberation Mono',monospace;font-size:15.8px;line-height:15.8px;color:#d9daeb;white-space:pre">    <span style="color:#acadb6;font-style:italic;"> * @dev Store value in variable</span></div>
<div style="position:absolute;left:540px;width:53.6px;text-align:right;top:458.89px;font-family:'Liberation Mono',monospace;font-size:15.8px;line-height:15.8px;color:#9497ad">15</div>
<div style="position:absolute;left:616.8px;top:458.89px;font-family:'Liberation Mono',monospace;font-size:15.8px;line-height:15.8px;color:#d9daeb;white-space:pre">    <span style="color:#acadb6;font-style:italic;"> * @param num value to store</span></div>
<div style="position:absolute;left:540px;width:53.6px;text-align:right;top:479.89px;font-family:'Liberation Mono',monospace;font-size:15.8px;line-height:15.8px;color:#9497ad">16</div>
<div style="position:absolute;left:616.8px;top:479.89px;font-family:'Liberation Mono',monospace;font-size:15.8px;line-height:15.8px;color:#d9daeb;white-space:pre">    <span style="color:#acadb6;font-style:italic;"> */</span></div>
<div style="position:absolute;left:540px;width:53.6px;text-align:right;top:500.89px;font-family:'Liberation Mono',monospace;font-size:15.8px;line-height:15.8px;color:#9497ad">17</div>
<div style="position:absolute;left:616.8px;top:500.89px;font-family:'Liberation Mono',monospace;font-size:15.8px;line-height:15.8px;color:#d9daeb;white-space:pre">    <span style="color:#5cc5e8;">function</span> <span style="color:#3fcf9f;">store</span><span style="color:#d9daeb;">(</span><span style="color:#5cc5e8;">uint256</span> <span style="color:#e6c58d;">num</span><span style="color:#d9daeb;">)</span> <span style="color:#e6e53f;">public</span> <span style="color:#d9daeb;">{</span></div>
<div style="position:absolute;left:540px;width:53.6px;text-align:right;top:521.89px;font-family:'Liberation Mono',monospace;font-size:15.8px;line-height:15.8px;color:#9497ad">18</div>
<div style="position:absolute;left:616.8px;top:521.89px;font-family:'Liberation Mono',monospace;font-size:15.8px;line-height:15.8px;color:#d9daeb;white-space:pre">        <span style="color:#d9daeb;">number = num;</span></div>
<div style="position:absolute;left:540px;width:53.6px;text-align:right;top:542.89px;font-family:'Liberation Mono',monospace;font-size:15.8px;line-height:15.8px;color:#9497ad">19</div>
<div style="position:absolute;left:616.8px;top:542.89px;font-family:'Liberation Mono',monospace;font-size:15.8px;line-height:15.8px;color:#d9daeb;white-space:pre">    <span style="color:#d9daeb;">}</span></div>
<div style="position:absolute;left:540px;width:53.6px;text-align:right;top:563.89px;font-family:'Liberation Mono',monospace;font-size:15.8px;line-height:15.8px;color:#9497ad">20</div>
<div style="position:absolute;left:540px;width:53.6px;text-align:right;top:584.89px;font-family:'Liberation Mono',monospace;font-size:15.8px;line-height:15.8px;color:#9497ad">21</div>
<div style="position:absolute;left:616.8px;top:584.89px;font-family:'Liberation Mono',monospace;font-size:15.8px;line-height:15.8px;color:#d9daeb;white-space:pre">    <span style="color:#acadb6;font-style:italic;">/**</span></div>
<div style="position:absolute;left:540px;width:53.6px;text-align:right;top:605.89px;font-family:'Liberation Mono',monospace;font-size:15.8px;line-height:15.8px;color:#9497ad">22</div>
<div style="position:absolute;left:616.8px;top:605.89px;font-family:'Liberation Mono',monospace;font-size:15.8px;line-height:15.8px;color:#d9daeb;white-space:pre">    <span style="color:#acadb6;font-style:italic;"> * @dev Return value</span></div>
<div style="position:absolute;left:540px;width:53.6px;text-align:right;top:626.89px;font-family:'Liberation Mono',monospace;font-size:15.8px;line-height:15.8px;color:#9497ad">23</div>
<div style="position:absolute;left:616.8px;top:626.89px;font-family:'Liberation Mono',monospace;font-size:15.8px;line-height:15.8px;color:#d9daeb;white-space:pre">    <span style="color:#acadb6;font-style:italic;"> * @return value of 'number'</span></div>
<div style="position:absolute;left:540px;width:53.6px;text-align:right;top:647.89px;font-family:'Liberation Mono',monospace;font-size:15.8px;line-height:15.8px;color:#9497ad">24</div>
<div style="position:absolute;left:616.8px;top:647.89px;font-family:'Liberation Mono',monospace;font-size:15.8px;line-height:15.8px;color:#d9daeb;white-space:pre">    <span style="color:#acadb6;font-style:italic;"> */</span></div>
<div style="position:absolute;left:540px;width:53.6px;text-align:right;top:668.89px;font-family:'Liberation Mono',monospace;font-size:15.8px;line-height:15.8px;color:#9497ad">25</div>
<div style="position:absolute;left:616.8px;top:668.89px;font-family:'Liberation Mono',monospace;font-size:15.8px;line-height:15.8px;color:#d9daeb;white-space:pre">    <span style="color:#5cc5e8;">function</span> <span style="color:#3fcf9f;">retrieve</span><span style="color:#d9daeb;">()</span> <span style="color:#e6e53f;">public</span> <span style="color:#e7c51a;">view</span> <span style="color:#f2a25e;">returns</span> <span style="color:#d9daeb;">(</span><span style="color:#5cc5e8;">uint256</span><span style="color:#d9daeb;">){</span></div>
<div style="position:absolute;left:540px;width:53.6px;text-align:right;top:689.89px;font-family:'Liberation Mono',monospace;font-size:15.8px;line-height:15.8px;color:#9497ad">26</div>
<div style="position:absolute;left:616.8px;top:689.89px;font-family:'Liberation Mono',monospace;font-size:15.8px;line-height:15.8px;color:#d9daeb;white-space:pre">        <span style="color:#f2a25e;">return</span> <span style="color:#d9daeb;">number;</span></div>
<div style="position:absolute;left:540px;width:53.6px;text-align:right;top:710.89px;font-family:'Liberation Mono',monospace;font-size:15.8px;line-height:15.8px;color:#9497ad">27</div>
<div style="position:absolute;left:616.8px;top:710.89px;font-family:'Liberation Mono',monospace;font-size:15.8px;line-height:15.8px;color:#d9daeb;white-space:pre">    <span style="color:#d9daeb;">}</span></div>
<div style="position:absolute;left:540px;width:53.6px;text-align:right;top:731.89px;font-family:'Liberation Mono',monospace;font-size:15.8px;line-height:15.8px;color:#9497ad">28</div>
<div style="position:absolute;left:616.8px;top:731.89px;font-family:'Liberation Mono',monospace;font-size:15.8px;line-height:15.8px;color:#d9daeb;white-space:pre"><span style="color:#d9daeb;">}</span></div>
<div style="position:absolute;left:796.5px;top:372px;width:1.0px;height:18px;background:#8a8da3"></div>
<svg style="position:absolute;left:0;top:0" width="1999" height="1267" viewBox="0 0 1999 1267"><circle cx="559.3" cy="138" r="6" fill="none" stroke="#a9adc9" stroke-width="2"/><path d="M563.7 142.4 L567.7 146.4" stroke="#a9adc9" stroke-width="2.6" stroke-linecap="round"/><path d="M556.3 138 H562.3" stroke="#a9adc9" stroke-width="1.8"/><circle cx="588.5999999999999" cy="138" r="6" fill="none" stroke="#a9adc9" stroke-width="2"/><path d="M593.0 142.4 L597.0 146.4" stroke="#a9adc9" stroke-width="2.6" stroke-linecap="round"/><path d="M585.5999999999999 138 H591.5999999999999" stroke="#a9adc9" stroke-width="1.8"/><path d="M588.5999999999999 135 V141" stroke="#a9adc9" stroke-width="1.8"/><path d="M612.6 139 A7.7 7.7 0 0 1 628 139" fill="none" stroke="#eeeef6" stroke-width="1.5"/><g fill="#eeeef6"><path d="M613.6 135.8 H611.6 Q609.7 136.3 609.7 139.3 Q609.7 143 612 143 H613.8z M627 135.8 H629 Q630.9 136.3 630.9 139.3 Q630.9 143 628.6 143 H626.8z"/><circle cx="620.3" cy="138.4" r="5.9"/><path d="M614.3 143.6 L620.3 145.6 L626.3 143.6 L620.3 148.6z"/></g><path d="M614 142.6 L620.3 144.8 L626.6 142.6" fill="none" stroke="#222336" stroke-width="1.1"/><rect x="720.9" y="129.7" width="15.3" height="15.6" fill="#a9adc9"/><text x="724.3" y="144" font-family="Liberation Sans" font-weight="700" font-size="9" fill="#222336" letter-spacing="-0.3">JS</text><g fill="#babcd6"><path d="M903.2 130.7 H908.2 L910.6 134.8 L908.2 138.9 L905.7 134.8 H900.8z"/><path d="M908.2 146.7 H903.2 L900.8 142.6 L903.2 138.5 L905.7 142.6 H910.6z"/></g><path d="M1035.8 133.8 L1047.4 145 M1047.4 133.8 L1035.8 145" stroke="#6f7291" stroke-width="3.2" stroke-linecap="round"/><path d="M1915.6 138.6 H1923.6 L1919.6 142.6z" fill="#f0f1f6"/><path d="M597.2 252.8 H603.6 L600.4 258.4z" fill="#8a8da3"/><path d="M597.2 336.8 H603.6 L600.4 342.4z" fill="#8a8da3"/><path d="M597.2 420.8 H603.6 L600.4 426.4z" fill="#8a8da3"/><path d="M597.2 504.8 H603.6 L600.4 510.4z" fill="#8a8da3"/><path d="M597.2 588.8 H603.6 L600.4 594.4z" fill="#8a8da3"/><path d="M597.2 672.8 H603.6 L600.4 678.4z" fill="#8a8da3"/><path d="M655.5 435 V456" stroke="#3a3d52" stroke-width="1" stroke-dasharray="1 2"/><path d="M655.5 456 V477" stroke="#3a3d52" stroke-width="1" stroke-dasharray="1 2"/><path d="M655.5 477 V498" stroke="#3a3d52" stroke-width="1" stroke-dasharray="1 2"/><path d="M655.5 519 V540" stroke="#3a3d52" stroke-width="1" stroke-dasharray="1 2"/><path d="M655.5 603 V624" stroke="#3a3d52" stroke-width="1" stroke-dasharray="1 2"/><path d="M655.5 624 V645" stroke="#3a3d52" stroke-width="1" stroke-dasharray="1 2"/><path d="M655.5 645 V666" stroke="#3a3d52" stroke-width="1" stroke-dasharray="1 2"/><path d="M655.5 687 V708" stroke="#3a3d52" stroke-width="1" stroke-dasharray="1 2"/></svg>
<div style="position:absolute;left:547px;top:849px;width:1393px;height:77px;background:#2a2c3f"></div>
<div style="position:absolute;left:623.80px;top:895.55px;font-family:'Liberation Sans', sans-serif;font-size:16.6px;line-height:16.6px;font-weight:400;color:#a9adc9;white-space:pre;">1</div>
<div style="position:absolute;left:665.4px;top:892px;width:21.2px;height:21.6px;border-radius:3px;background:#2c2f43;border:1px solid #45485e"></div>
<div style="position:absolute;left:696.80px;top:896.53px;font-family:'Liberation Sans', sans-serif;font-size:17.8px;line-height:17.8px;font-weight:400;color:#b9bbcf;white-space:pre;">listen on network</div>
<div style="position:absolute;left:913.6px;top:886.8px;width:370.4px;height:33.8px;border-radius:4px;background:#363a4e"></div>
<div style="position:absolute;left:930.30px;top:895.84px;font-family:'Liberation Sans', sans-serif;font-size:18.5px;line-height:18.5px;font-weight:400;color:#8f93aa;white-space:pre;">Search with transaction hash or address</div>
<div style="position:absolute;left:578.50px;top:933.04px;font-family:'Liberation Mono', monospace;font-size:14.3px;line-height:14.3px;font-weight:400;color:#c3c5d6;white-space:pre;">creation of Storage pending...</div>
<div style="position:absolute;left:630.40px;top:1037.72px;font-family:'Liberation Mono', monospace;font-size:15.5px;line-height:15.5px;font-weight:400;color:#c3c5d6;white-space:pre;"><b>[vm]</b><span style="margin-left:15.5px"></span><b>from:</b> 0x5B3...eddC4 <b>to:</b> Storage.(constructor) <b>value:</b> 0 wei <b>data:</b> 0x608...70033 <b>logs:</b> 0 <b>hash:</b> 0x954...14717</div>
<div style="position:absolute;left:1797px;top:1025.7px;width:71.7px;height:36.7px;border-radius:3px;background:#007aa6"></div>
<div style="position:absolute;left:1808.70px;top:1036.91px;font-family:'Liberation Mono', monospace;font-size:16.3px;line-height:16.3px;font-weight:700;color:#ffffff;white-space:pre;">Debug</div>
<div style="position:absolute;left:578.50px;top:1103.44px;font-family:'Liberation Mono', monospace;font-size:14.3px;line-height:14.3px;font-weight:400;color:#c3c5d6;white-space:pre;">creation of Storage pending...</div>
<div style="position:absolute;left:1929px;top:1110px;width:11px;height:79px;border-radius:5px;background:#42455b"></div>
<svg style="position:absolute;left:0;top:0" width="1999" height="1267" viewBox="0 0 1999 1267"><path d="M557.8 896.5 L562.3 901 L566.8 896.5 M557.8 902.8 L562.3 907.3 L566.8 902.8" fill="none" stroke="#a9adc9" stroke-width="2.7" stroke-linecap="round" stroke-linejoin="round"/><circle cx="596" cy="903.2" r="7" fill="none" stroke="#a9adc9" stroke-width="2.1"/><path d="M591.2 898.4 L600.8 908" stroke="#a9adc9" stroke-width="2.1"/><circle cx="883.3" cy="900.6" r="5.2" fill="none" stroke="#a9adc9" stroke-width="2.4"/><path d="M887.2 904.5 L891.6 908.9" stroke="#a9adc9" stroke-width="2.8" stroke-linecap="round"/><circle cx="591.5" cy="1043.5" r="12.5" fill="#32ba89"/><path d="M585 1043.5 L589.8 1048.3 L598.2 1039.9" fill="none" stroke="#222336" stroke-width="3.2" stroke-linecap="round" stroke-linejoin="round"/><path d="M1882.8 1039 L1890.2 1046.4 L1897.6 1039" fill="none" stroke="#a9adc9" stroke-width="3" stroke-linecap="round" stroke-linejoin="round"/><path d="M554.6 1164.8 L562.6 1169 L554.6 1173.3" fill="none" stroke="#a9adc9" stroke-width="2.4" stroke-linecap="round" stroke-linejoin="miter"/></svg>
</div></div>
</body></html>
